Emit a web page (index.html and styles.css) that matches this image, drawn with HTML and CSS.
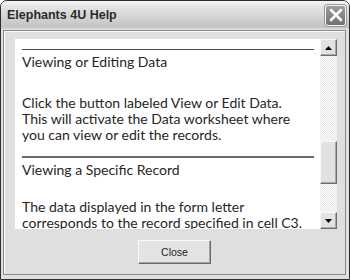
FILE: index.html
```html
<!DOCTYPE html>
<html lang="en">
<head>
    <meta charset="UTF-8">
    <title>Elephants 4U Help</title>
    <link rel="stylesheet" href="styles.css">
</head>
<body>
    <div class="window">
        <div class="titlebar">
            <span class="title">Elephants 4U Help</span>
            <button class="close-x" aria-label="Close">
                <svg width="14" height="14" viewBox="0 0 14 14">
                    <path d="M2 2 L12 12 M12 2 L2 12" stroke="#fff" stroke-width="2.6" stroke-linecap="round"/>
                </svg>
            </button>
        </div>
        <div class="body">
            <div class="frame">
                <div class="viewer">
                    <div class="page">
                        <hr class="rule rule-top">
                        <h2>Viewing or Editing Data</h2>
                        <p>Click the button labeled View or Edit Data.<br>This will activate the Data worksheet where<br>you can view or edit the records.</p>
                        <hr class="rule rule-mid">
                        <h2 class="last-head">Viewing a Specific Record</h2>
                        <p>The data displayed in the form letter<br>corresponds to the record specified in cell C3.</p>
                    </div>
                    <div class="scrollbar">
                        <div class="sb-btn">
                            <svg width="7" height="4" viewBox="0 0 7 4"><path d="M0 4 L3.5 0 L7 4 Z" fill="#000"/></svg>
                        </div>
                        <div class="sb-track">
                            <div class="sb-thumb"></div>
                        </div>
                        <div class="sb-btn">
                            <svg width="7" height="4" viewBox="0 0 7 4"><path d="M0 0 L7 0 L3.5 4 Z" fill="#000"/></svg>
                        </div>
                    </div>
                </div>
                <div class="footer">
                    <button class="btn">Close</button>
                </div>
            </div>
        </div>
    </div>
</body>
</html>
```

FILE: styles.css
```css
body, html {
    margin: 0;
    padding: 0;
    background-color: #fff;
}
.window {
    width: 350px;
    height: 280px;
    box-sizing: border-box;
    border: 1px solid #2e2e2e;
    border-radius: 7px 7px 0 0;
    overflow: hidden;
    display: flex;
    flex-direction: column;
    background-color: #dfdfdf;
}
.titlebar {
    height: 28px;
    flex: none;
    display: flex;
    align-items: center;
    justify-content: space-between;
    padding: 0 3px 0 6px;
    background: linear-gradient(to bottom, #f6f6f6 0%, #e2e2e2 25%, #d0d0d0 65%, #c4c4c4 92%, #d6d6d6 100%);
}
.title {
    font-family: "Liberation Sans", Arial, sans-serif;
    font-weight: bold;
    font-size: 12.5px;
    color: #2a2a2a;
}
.close-x {
    width: 21px;
    height: 21px;
    padding: 0;
    border: 1px solid #f4f4f4;
    border-radius: 3px;
    background: linear-gradient(to bottom, #9c9c9c, #727272);
    box-shadow: 0 0 0 1px #9a9a9a;
    display: flex;
    align-items: center;
    justify-content: center;
}
.body {
    flex: 1;
    display: flex;
    padding: 1px 3px 4px 2px;
}
.frame {
    flex: 1;
    display: flex;
    flex-direction: column;
    border: 1px solid #8a8a8a;
    box-shadow: inset 1px 1px 0 #fbfbfb;
    padding: 8px 0 0 11px;
}
.viewer {
    height: 190px;
    display: flex;
}
.page {
    width: 305px;
    background-color: #fff;
    padding: 10px 6px 0 7px;
    box-sizing: border-box;
    overflow: hidden;
    font-family: Lato, "Open Sans", sans-serif;
    font-size: 14px;
    line-height: 16px;
    color: #262626;
}
.rule {
    margin: 0;
    border: none;
    border-top: 1px solid #4a4a4a;
}
.rule-mid {
    border-top: 2px solid #6a6a6a;
}
.page h2 {
    margin: 4px 0 25px;
    font-size: 14px;
    font-weight: normal;
}
.page .last-head {
    margin-bottom: 21px;
}
.page p {
    margin: 0 0 13px;
}
.scrollbar {
    width: 17px;
    display: flex;
    flex-direction: column;
}
.sb-btn {
    height: 17px;
    box-sizing: border-box;
    flex: none;
    background-color: #e2e2e2;
    border: 1px solid;
    border-color: #f8f8f8 #6e6e6e #6e6e6e #f8f8f8;
    box-shadow: inset -1px -1px 0 #a8a8a8;
    display: flex;
    align-items: center;
    justify-content: center;
}
.sb-track {
    flex: 1;
    background: repeating-conic-gradient(#fafafa 0 25%, #e9e9e9 0 50%) 0 0 / 2px 2px;
}
.sb-thumb {
    margin-top: 85px;
    height: 43px;
    box-sizing: border-box;
    background-color: #e2e2e2;
    border: 1px solid;
    border-color: #f8f8f8 #6e6e6e #6e6e6e #f8f8f8;
    box-shadow: inset -1px -1px 0 #a8a8a8;
}
.footer {
    flex: 1;
    display: flex;
    align-items: center;
    justify-content: center;
    margin-left: -11px;
}
.btn {
    width: 73px;
    height: 24px;
    padding: 0;
    background-color: #e4e4e4;
    border: 1px solid;
    border-color: #fafafa #6a6a6a #6a6a6a #fafafa;
    box-shadow: inset -1px -1px 0 #a4a4a4;
    font-family: "Liberation Sans", Arial, sans-serif;
    font-size: 10.5px;
    color: #222;
}
```
